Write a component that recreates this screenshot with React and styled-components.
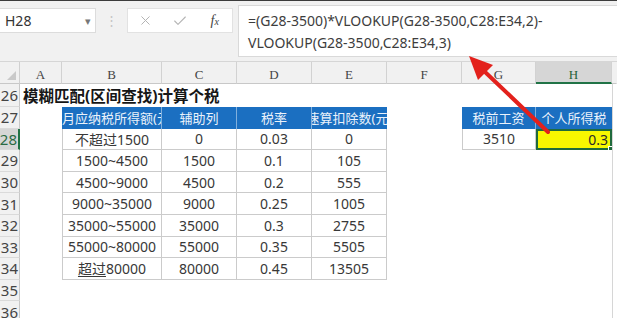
import styled, { createGlobalStyle } from "styled-components";
import { X, Check } from "lucide-react";

const GlobalStyle = createGlobalStyle`
    body {
        margin: 0;
        background: #fff;
        overflow: hidden;
        font-family: "Noto Sans", "Noto Sans CJK SC", sans-serif;
    }
`;

const COLS = ["A", "B", "C", "D", "E", "F", "G", "H"];
const ROWS = [26, 27, 28, 29, 30, 31, 32, 33, 34, 35, 36];

const bracket = [
    ["全月应纳税所得额(元)", "辅助列", "税率", "速算扣除数(元)"],
    ["不超过1500", "0", "0.03", "0"],
    ["1500~4500", "1500", "0.1", "105"],
    ["4500~9000", "4500", "0.2", "555"],
    ["9000~35000", "9000", "0.25", "1005"],
    ["35000~55000", "35000", "0.3", "2755"],
    ["55000~80000", "55000", "0.35", "5505"],
    ["超过80000", "80000", "0.45", "13505"],
];

// what sits in each cell of the sheet
function cellAt(row, col) {
    if (row === 26 && col === "A") return { kind: "title", text: "模糊匹配(区间查找)计算个税" };
    const ci = "BCDE".indexOf(col);
    if (ci >= 0 && row >= 27 && row <= 34) {
        const text = bracket[row - 27][ci];
        return {
            kind: row === 27 ? "head" : "data",
            text,
            first: ci === 0,
            last: ci === 3,
        };
    }
    if (row === 27 && col === "G") return { kind: "head", text: "税前工资" };
    if (row === 27 && col === "H") return { kind: "head", text: "个人所得税", last: true };
    if (row === 28 && col === "G") return { kind: "data", text: "3510", first: true };
    if (row === 28 && col === "H") return { kind: "picked", text: "0.3" };
    return { kind: "blank" };
}

function CellText({ text }) {
    if (text.startsWith("超过")) {
        return (
            <span>
                <u>超过</u>
                {text.slice(2)}
            </span>
        );
    }
    return <span>{text}</span>;
}

export default function App() {
    return (
        <Page>
            <GlobalStyle />
            <TopBar>
                <NameBox>
                    H28
                    <Caret>▾</Caret>
                </NameBox>
                <Grip>⋮</Grip>
                <FxBox>
                    <X size={15} strokeWidth={1.6} />
                    <Check size={16} strokeWidth={1.6} />
                    <Fx>
                        f<small>x</small>
                    </Fx>
                </FxBox>
                <FormulaBox>
                    <div>=(G28-3500)*VLOOKUP(G28-3500,C28:E34,2)-</div>
                    <div>VLOOKUP(G28-3500,C28:E34,3)</div>
                </FormulaBox>
            </TopBar>

            <Sheet>
                <Corner>
                    <CornerMark />
                </Corner>
                {COLS.map((c) => (
                    <ColHead key={c} $active={c === "H"}>
                        {c}
                    </ColHead>
                ))}
                <ColHead $rest />

                {ROWS.map((r) => [
                    <RowHead key={"h" + r} $active={r === 28}>
                        {r}
                    </RowHead>,
                    ...COLS.map((c) => {
                        const cell = cellAt(r, c);
                        return (
                            <Cell key={c + r} $kind={cell.kind} $first={cell.first} $last={cell.last}>
                                {cell.text && <CellText text={cell.text} />}
                            </Cell>
                        );
                    }),
                    <Cell key={"z" + r} $kind="blank" $rest />,
                ])}
            </Sheet>

            <Arrow width="617" height="318" viewBox="0 0 617 318">
                <line x1="548" y1="132" x2="484" y2="71" stroke="#e3211c" strokeWidth="4" strokeLinecap="round" />
                <polygon points="469,56 493,65 478,80" fill="#e3211c" />
            </Arrow>
        </Page>
    );
}

const Page = styled.div`
    position: relative;
    width: 617px;
    height: 318px;
    overflow: hidden;
    background: #fff;
`;

const TopBar = styled.div`
    display: flex;
    align-items: flex-start;
    height: 62px;
    box-sizing: border-box;
    background: #f1f1f1;
    border-top: 1px solid #3c3c3c;
    border-bottom: 1px solid #d6d6d6;
`;

const NameBox = styled.div`
    display: flex;
    align-items: center;
    justify-content: space-between;
    width: 96px;
    height: 25px;
    margin-top: 7px;
    box-sizing: border-box;
    padding: 0 4px 0 5px;
    background: #fff;
    border: 1px solid #dcdcdc;
    border-left: none;
    font-size: 14px;
    color: #333;
`;

const Caret = styled.span`
    font-size: 11px;
    color: #777;
`;

const Grip = styled.div`
    width: 31px;
    margin-top: 7px;
    line-height: 25px;
    text-align: center;
    font-size: 13px;
    color: #c4c4c4;
`;

const FxBox = styled.div`
    display: grid;
    grid-template-columns: repeat(3, 1fr);
    place-items: center;
    width: 106px;
    height: 25px;
    margin-top: 7px;
    box-sizing: border-box;
    background: #fff;
    border: 1px solid #e2e2e2;
    color: #b4b4b4;
`;

const Fx = styled.span`
    font-family: "Liberation Serif", serif;
    font-style: italic;
    font-size: 14px;
    color: #444;
    small {
        font-size: 10px;
    }
`;

const FormulaBox = styled.div`
    flex: 1;
    height: 52px;
    margin: 4px 0 0 5px;
    box-sizing: border-box;
    padding: 4px 0 0 9px;
    background: #fff;
    border: 1px solid #d9d9d9;
    border-right: none;
    font-size: 14px;
    line-height: 22px;
    color: #3d3d3d;
    white-space: nowrap;
`;

const Sheet = styled.div`
    display: grid;
    grid-template-columns: 20px 42px 100px 75px 75px 75px 75px 74px 76px 1fr;
    grid-template-rows: 22px 23px repeat(10, 21.6px);
`;

const Corner = styled.div`
    position: relative;
    background: #f1f1f1;
    border-right: 1px solid #d0d0d0;
    border-bottom: 1px solid #c8c8c8;
`;

const CornerMark = styled.div`
    position: absolute;
    right: 3px;
    bottom: 3px;
    width: 0;
    height: 0;
    border-left: 9px solid transparent;
    border-bottom: 9px solid #c9c9c9;
`;

const ColHead = styled.div`
    display: flex;
    align-items: center;
    justify-content: center;
    padding-top: 5px;
    box-sizing: border-box;
    background: ${(p) => (p.$active ? "#d6d6d6" : "#f1f1f1")};
    border-right: 1px solid ${(p) => (p.$rest ? "transparent" : "#d2d2d2")};
    border-bottom: ${(p) => (p.$active ? "2px solid #217346" : "1px solid #c8c8c8")};
    font-family: "Liberation Serif", "DejaVu Serif", serif;
    font-size: 13px;
    color: ${(p) => (p.$active ? "#1f5f38" : "#444")};
`;

const RowHead = styled.div`
    display: flex;
    align-items: center;
    justify-content: flex-end;
    overflow: hidden;
    box-sizing: border-box;
    padding-right: 1px;
    background: ${(p) => (p.$active ? "#d6d6d6" : "#f1f1f1")};
    border-right: ${(p) => (p.$active ? "2px solid #217346" : "1px solid #c8c8c8")};
    border-bottom: 1px solid #dadada;
    font-size: 15px;
    color: ${(p) => (p.$active ? "#2b6a44" : "#444")};
`;

const kinds = {
    blank: `
        background: #fff;
    `,
    title: `
        justify-content: flex-start;
        padding-left: 3px;
        overflow: visible;
        z-index: 1;
        font-size: 15.5px;
        font-weight: 700;
        color: #161616;
    `,
    head: `
        background: #1b6fc1;
        color: #eaf2fb;
        font-size: 13px;
        border-right: 1px solid rgba(255, 255, 255, 0.45);
    `,
    data: `
        background: #fff;
        color: #383838;
        border-right: 1px solid #cbcbcb;
        border-bottom: 1px solid #cbcbcb;
    `,
    picked: `
        position: relative;
        justify-content: flex-end;
        padding-right: 4px;
        background: #f7f700;
        color: #2a2a2a;
        box-shadow: inset 0 0 0 2px #1f6a3c;
        &::after {
            content: "";
            position: absolute;
            right: -3px;
            bottom: -3px;
            width: 5px;
            height: 5px;
            background: #1f6a3c;
            border: 1px solid #fff;
        }
    `,
};

const Cell = styled.div`
    display: flex;
    align-items: center;
    justify-content: center;
    min-width: 0;
    overflow: hidden;
    box-sizing: border-box;
    white-space: nowrap;
    font-size: 14px;
    ${(p) => kinds[p.$kind]}
    ${(p) => p.$first && p.$kind === "data" && "border-left: 1px solid #cbcbcb;"}
    ${(p) => p.$last && p.$kind === "head" && "border-right: none;"}
    ${(p) => p.$rest && "border-left: 1px solid #d6d6d6;"}

    u {
        text-underline-offset: 2px;
    }
`;

const Arrow = styled.svg`
    position: absolute;
    left: 0;
    top: 0;
    pointer-events: none;
`;
